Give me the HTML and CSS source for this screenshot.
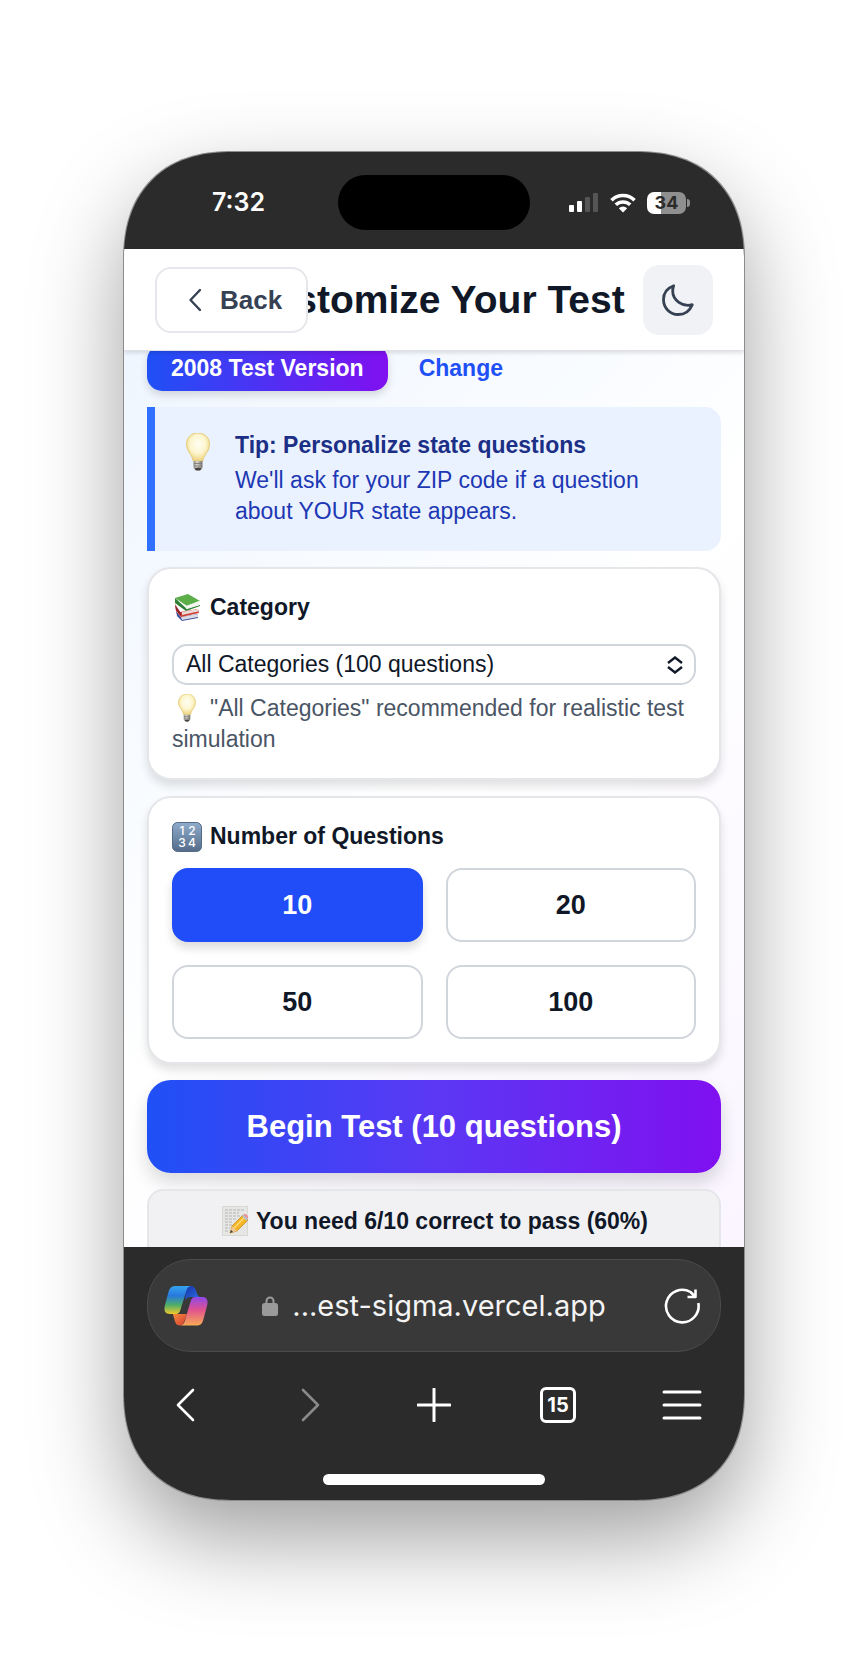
FILE: index.html
```html
<!DOCTYPE html>
<html lang="en">
<head>
<meta charset="utf-8">
<meta name="viewport" content="width=device-width, initial-scale=1">
<title>Customize Your Test</title>
<link rel="stylesheet" href="styles.css">
</head>
<body>
<svg class="defs" aria-hidden="true">
  <defs>
    <radialGradient id="glass" cx=".5" cy=".4" r=".6">
      <stop offset="0" stop-color="#fffef4"/><stop offset=".55" stop-color="#fdf6cf"/><stop offset="1" stop-color="#ecd27c"/>
    </radialGradient>
    <linearGradient id="socket" x1="0" x2="1" y1="0" y2="0">
      <stop offset="0" stop-color="#8d8b84"/><stop offset=".4" stop-color="#d8d6d0"/><stop offset="1" stop-color="#77746d"/>
    </linearGradient>
    <linearGradient id="keypad" x1="0" x2="0" y1="0" y2="1">
      <stop offset="0" stop-color="#8fabcb"/><stop offset="1" stop-color="#546c8a"/>
    </linearGradient>
    <linearGradient id="ribbonA" x1="0" x2="0" y1="0" y2="1">
      <stop offset="0" stop-color="#35a4f0"/><stop offset=".35" stop-color="#2878dc"/><stop offset=".68" stop-color="#4fae67"/><stop offset="1" stop-color="#f2c92c"/>
    </linearGradient>
    <linearGradient id="ribbonB" x1="0" x2="0" y1="0" y2="1">
      <stop offset="0" stop-color="#8f48e8"/><stop offset=".45" stop-color="#e0528f"/><stop offset="1" stop-color="#f9ab55"/>
    </linearGradient>
    <linearGradient id="foldA" x1="0" x2="1" y1="0" y2="1">
      <stop offset="0" stop-color="#1731a8"/><stop offset="1" stop-color="#2b74e8"/>
    </linearGradient>
    <linearGradient id="foldB" x1="0" x2="1" y1="0" y2="1">
      <stop offset="0" stop-color="#f58a3c"/><stop offset="1" stop-color="#d43c33"/>
    </linearGradient>
    <symbol id="bulb" viewBox="0 0 24 38">
      <path d="M12 0C5 0 .5 5 .5 11.500c0 5 3 8 5 11.500 1 1.800 1.200 4 2 5h9c.8-1 1-3.200 2-5 2-3.500 5-6.500 5-11.500C23.500 5 19 0 12 0z" fill="url(#glass)" stroke="#e6cb76"/>
      <path d="M7.500 28h9v6c0 2-2 3.500-4.500 3.500S7.500 36 7.500 34z" fill="url(#socket)"/>
      <path d="M8 30.500h8M8 33h8" stroke="#77736b" stroke-width=".8"/>
      <ellipse cx="12" cy="36" rx="3" ry="1.500" fill="#45423d"/>
    </symbol>
  </defs>
</svg>

<div class="phone">
  <div class="status">
    <span class="time">7:32</span>
    <span class="island"></span>
    <div class="status-icons">
      <svg width="30" height="20" viewBox="0 0 30 20" aria-label="Signal">
        <rect x="0" y="12" width="5" height="7" rx="1" fill="#fff"/>
        <rect x="8" y="8" width="5" height="11" rx="1" fill="#fff"/>
        <rect x="16" y="4" width="5" height="15" rx="1" fill="#555"/>
        <rect x="24" y="0" width="5" height="19" rx="1" fill="#555"/>
      </svg>
      <svg width="26" height="20" viewBox="0 0 26 20" aria-label="Wi-Fi">
        <g fill="none" stroke="#fff" stroke-width="3.600">
          <path d="M1.500 7.200a16.500 16.500 0 0 1 23 0"/>
          <path d="M5.800 11.800a10.500 10.500 0 0 1 14.400 0"/>
        </g>
        <path d="M8.800 15.200a6 6 0 0 1 8.400 0L13 19.500z" fill="#fff"/>
      </svg>
      <span class="battery">34</span>
    </div>
  </div>

  <header class="header">
    <h1 class="title">Customize Your Test</h1>
    <button class="back" type="button">
      <svg width="14" height="24" viewBox="0 0 14 24" aria-hidden="true"><path d="M12 2 2.500 12 12 22" fill="none" stroke="currentColor" stroke-width="2.400" stroke-linecap="round" stroke-linejoin="round"/></svg>
      Back
    </button>
    <button class="theme" type="button" aria-label="Dark mode">
      <svg width="34" height="34" viewBox="0 0 34 34" aria-hidden="true"><path d="M12.700 2.700C6.500 5 2.500 10 2.500 16.500c0 8.500 6.500 15 14.700 15 6.300 0 11.600-3.800 14.100-9.800-9.800 2.600-19.600-4.500-19.600-13.700 0-2 .3-3.800 1-5.300z" fill="none" stroke="currentColor" stroke-width="2.800" stroke-linejoin="round"/></svg>
    </button>
  </header>

  <main class="view">
    <div class="page">
      <div class="version">
        <span class="pill">2008 Test Version</span>
        <a class="change" href="#version">Change</a>
      </div>

      <section class="tip">
        <span class="tip-icon"><svg width="24" height="38"><use href="#bulb"/></svg></span>
        <div class="tip-text">
          <h2 class="heading">Tip: Personalize state questions</h2>
          <p>We'll ask for your ZIP code if a question about YOUR state appears.</p>
        </div>
      </section>

      <section class="card">
        <label class="heading" for="category">
          <span class="emoji"><svg width="26" height="27" viewBox="0 0 26 27" aria-hidden="true">
            <path d="M2 17l5 6 17-3v4L8 27l-5-5z" fill="#41539b"/>
            <path d="M7 23l17-3v3L8 26z" fill="#dcdce6"/>
            <path d="M1 10l5 8 18-3 1 4-18 4-5-6z" fill="#cf3e36"/>
            <path d="M8 18l16-3v2.500L8 21z" fill="#ecdcd9"/>
            <path d="M1 11l6 8v3l-5-6z" fill="#8d2630"/>
            <path d="M1 4 14 0l12 7-13 5z" fill="#5cae49"/>
            <path d="M1 4v5l11 8 14-5v-1l-13 4z" fill="#2f7f35"/>
            <path d="M12 12l13-5v4l-13 4z" fill="#f3f5ee"/>
          </svg></span>
          Category
        </label>
        <div class="select">
          <select id="category">
            <option>All Categories (100 questions)</option>
          </select>
          <svg class="arrows" width="18" height="18" viewBox="0 0 18 18" aria-hidden="true"><path d="M2 7 9 1.500 16 7M2 11l7 5.500 7-5.500" fill="none" stroke="currentColor" stroke-width="2.400"/></svg>
        </div>
        <p class="hint"><span class="emoji"><svg width="20" height="28"><use href="#bulb"/></svg></span>"All Categories" recommended for realistic test simulation</p>
      </section>

      <section class="card">
        <h2 class="heading">
          <span class="emoji"><svg width="30" height="30" viewBox="0 0 30 30" aria-hidden="true">
            <rect x=".5" y=".5" width="29" height="29" rx="5" fill="url(#keypad)" stroke="#536a87"/>
            <g class="keys"><text x="10" y="13">1</text><text x="20" y="13">2</text><text x="10" y="25">3</text><text x="20" y="25">4</text></g>
          </svg></span>
          Number of Questions
        </h2>
        <div class="counts">
          <button class="count selected" type="button">10</button>
          <button class="count" type="button">20</button>
          <button class="count" type="button">50</button>
          <button class="count" type="button">100</button>
        </div>
      </section>

      <button class="begin" type="button">Begin Test (10 questions)</button>

      <p class="pass">
        <span class="emoji"><svg width="27" height="30" viewBox="0 0 27 30" aria-hidden="true">
          <rect x=".5" y=".5" width="25" height="29" fill="#e6e6e4" stroke="#d8d8d5"/>
          <path d="M3 4h19M3 7h14M3 10h15M3 13h11M3 16h8M3 19h7M3 22h5M3 25h4" stroke="#b5b5b3" stroke-width="1" stroke-dasharray="3 1"/>
          <path d="M8 27l2-7L21 9l5 5-11 11z" fill="#f4b529" stroke="#c78a1c" stroke-width=".8"/>
          <path d="M12 22 23 11" stroke="#ffdd74" stroke-width="1.500"/>
          <path d="M8 27l2-7 5 5z" fill="#ecc795"/><path d="M8 27l1-3 2 2z" fill="#3b3632"/>
          <path d="M20 10l2-1.500 4 4.500-1.500 2z" fill="#b9c0c4"/>
          <path d="M21.500 8.500c2-1.500 5.500 1.500 4.500 4.500z" fill="#ec8a8f"/>
        </svg></span>
        You need 6/10 correct to pass (60%)
      </p>
    </div>
  </main>

  <footer class="browser">
    <div class="address">
      <button class="icon-button" type="button" aria-label="Copilot">
        <svg width="44" height="40" viewBox="0 0 44 40" aria-hidden="true">
          <path d="M22 0h5c2.500 0 4 1.500 5 4.500l1 3c.7 2.200 1.500 3.500 4 3.500h-9c-3 0-4.500 0-7 3z" fill="url(#foldA)"/>
          <path d="M9 28h14l-3 8c-.8 2.500-2 3.500-4 3.500-2.500 0-4-1-5-4l-1-3.500c-.6-2.500-1-3.500-1-4z" fill="url(#foldB)"/>
          <path d="M11 0h16c-2.500.4-3.800 2-4.800 5l-5.500 18c-1 3.800-2.500 5-5.200 5H6c-5 0-6.500-3-5-9L4.500 6C5.500 2 7.500 0 11 0z" fill="url(#ribbonA)"/>
          <path d="M33 39.500H16.500c2.500-.4 3.500-2 4.300-4.500l5.400-18.500c1-3.800 2.500-5.500 5.300-5.500H38c5 0 6.500 3 5 9l-3.500 13c-1 4.500-3 6.500-6.500 6.500z" fill="url(#ribbonB)"/>
        </svg>
      </button>
      <button class="url" type="button">
        <svg width="16" height="20" viewBox="0 0 16 20" aria-hidden="true"><path d="M4.500 9V5a3.500 3.500 0 0 1 7 0v4" fill="none" stroke="#9a9a9a" stroke-width="2"/><rect y="7" width="16" height="13" rx="2.500" fill="#9a9a9a"/></svg>
        ...est-sigma.vercel.app
      </button>
      <button class="icon-button" type="button" aria-label="Reload">
        <svg width="36" height="36" viewBox="0 0 36 36" aria-hidden="true"><path d="M34.300 15A16.300 16.300 0 1 1 26.500 4l5 5M31.500 1.500V9h-8" fill="none" stroke="currentColor" stroke-width="2.600" stroke-linejoin="round"/></svg>
      </button>
    </div>
    <nav class="toolbar">
      <button class="icon-button" type="button" aria-label="Back"><svg width="20" height="34" viewBox="0 0 20 34"><path d="M17 2 2 17l15 15" fill="none" stroke="currentColor" stroke-width="2.600" stroke-linecap="round" stroke-linejoin="round"/></svg></button>
      <button class="icon-button muted" type="button" aria-label="Forward"><svg width="20" height="34" viewBox="0 0 20 34"><path d="M3 2l15 15L3 32" fill="none" stroke="currentColor" stroke-width="2.600" stroke-linecap="round" stroke-linejoin="round"/></svg></button>
      <button class="icon-button" type="button" aria-label="New tab"><svg width="34" height="34" viewBox="0 0 34 34"><path d="M17 1v32M1 17h32" stroke="currentColor" stroke-width="3" stroke-linecap="round"/></svg></button>
      <button class="icon-button" type="button" aria-label="Tabs"><span class="tabs">15</span></button>
      <button class="icon-button" type="button" aria-label="Menu"><svg width="40" height="30" viewBox="0 0 40 30"><path d="M2 2h36M2 15h36M2 28h36" stroke="currentColor" stroke-width="3" stroke-linecap="round"/></svg></button>
    </nav>
    <div class="home"></div>
  </footer>
</div>
</body>
</html>
```
FILE: styles.css
```css
* {
  box-sizing: border-box;
}

body {
  margin: 0;
  padding: 152px 124px 160px;
  background: #fff;
  color: #101828;
  font: 23px/31px "Liberation Sans", Arial, sans-serif;
}

h1,
h2,
p {
  margin: 0;
}

button,
select {
  margin: 0;
  padding: 0;
  border: 0;
  background: none;
  color: inherit;
  font: inherit;
}

svg {
  flex: none;
}

.defs {
  position: absolute;
  width: 0;
  height: 0;
}

.phone {
  display: flex;
  flex-direction: column;
  height: calc(100vh - 312px);
  min-height: 900px;
  overflow: hidden;
  border-radius: 96px;
  background: #2b2b2b;
  box-shadow: 0 0 0 1px #8c8c8c, 0 38px 90px rgba(0, 0, 0, 0.38);
}

@supports (corner-shape: superellipse(1.2)) {
  .phone {
    border-radius: 108px;
    corner-shape: superellipse(1.2);
  }
}

/* Status bar */
.status {
  display: grid;
  flex: none;
  grid-template-columns: 1fr 192px 1fr;
  align-items: center;
  justify-items: center;
  padding: 23px 15px 19px;
  color: #fff;
  font-family: Inter, sans-serif;
}

.time {
  font-size: 25px;
  font-weight: 600;
}

.island {
  width: 100%;
  height: 55px;
  border-radius: 28px;
  background: #000;
}

.status-icons {
  display: flex;
  align-items: center;
  gap: 11px;
}

.battery {
  position: relative;
  width: 39px;
  height: 22px;
  margin-right: 4px;
  border-radius: 7px;
  background: linear-gradient(90deg, #fff 36%, #8f8f8f 36%);
  color: #2b2b2b;
  font-size: 18px;
  font-weight: 700;
  line-height: 22px;
  text-align: center;
}

.battery::after {
  position: absolute;
  top: 7px;
  right: -4px;
  width: 3px;
  height: 8px;
  border-radius: 0 3px 3px 0;
  background: #8f8f8f;
  content: "";
}

/* Page header */
.header {
  display: grid;
  z-index: 1;
  flex: none;
  grid-template-columns: auto 1fr auto;
  align-items: center;
  padding: 16px 31px 15px;
  border-bottom: 1px solid #dfe1e7;
  background: #fff;
  box-shadow: 0 2px 4px rgba(0, 0, 0, 0.12);
}

.title {
  grid-area: 1 / 1 / 2 / -1;
  font-size: 39px;
  line-height: 46px;
  text-align: center;
  white-space: nowrap;
}

.back {
  display: flex;
  grid-area: 1 / 1;
  align-items: center;
  gap: 18px;
  height: 66px;
  padding: 0 24px 0 31px;
  border: 2px solid #e5e7eb;
  border-radius: 16px;
  background: #fff;
  color: #364153;
  font-size: 26px;
  font-weight: 700;
}

.theme {
  display: grid;
  grid-area: 1 / 3;
  place-items: center;
  width: 70px;
  height: 70px;
  border-radius: 16px;
  background: #f1f2f5;
  color: #364153;
}

/* Scrolled page */
.view {
  flex: 1;
  min-height: 0;
  overflow: hidden;
  background: linear-gradient(135deg, #eff6ff, #fff 50%, #faf5ff);
}

.page {
  display: flex;
  flex-direction: column;
  gap: 16px;
  margin-top: -6px;
  padding: 0 23px;
}

.version {
  display: flex;
  align-items: center;
  gap: 31px;
  font-weight: 700;
}

.pill {
  padding: 8px 24px 7px;
  border-radius: 15px;
  background: linear-gradient(90deg, #1f50f6, #8010f0);
  box-shadow: 0 4px 8px rgba(0, 0, 0, 0.14);
  color: #fff;
}

.change {
  color: #1f50f6;
  text-decoration: none;
}

.tip {
  display: flex;
  gap: 17px;
  padding: 23px 24px 24px 23px;
  border-left: 8px solid #3070ff;
  border-radius: 0 16px 16px 0;
  background: #ebf2ff;
  color: #1d38b4;
}

.tip-icon {
  display: flex;
  flex: none;
  justify-content: center;
  width: 40px;
  padding-top: 3px;
}

.tip-text {
  display: grid;
  gap: 4px;
}

.tip .heading {
  color: #1c2f86;
}

.heading {
  display: flex;
  align-items: center;
  font-size: 23px;
  font-weight: 700;
  line-height: 31px;
}

.emoji {
  display: inline-flex;
  align-items: center;
  justify-content: center;
  width: 30px;
  height: 30px;
  margin-right: 8px;
  vertical-align: top;
}

.card {
  padding: 23px;
  border: 2px solid #e5e6ea;
  border-radius: 24px;
  background: #fff;
  box-shadow: 0 6px 10px rgba(0, 0, 0, 0.12);
}

.select {
  display: grid;
  align-items: center;
  margin: 21px 0 8px;
}

.select select {
  grid-area: 1 / 1;
  width: 100%;
  height: 41px;
  padding: 0 40px 0 12px;
  border: 2px solid #d1d5dc;
  border-radius: 15px;
  background: #fff;
  appearance: none;
}

.arrows {
  grid-area: 1 / 1;
  justify-self: end;
  margin-right: 12px;
  pointer-events: none;
}

.hint {
  color: #4a5565;
}

.keys {
  fill: #fff;
  font: 500 12px Inter, sans-serif;
  text-anchor: middle;
}

.counts {
  display: grid;
  grid-template-columns: 1fr 1fr;
  gap: 23px;
  margin-top: 16px;
}

.count {
  height: 74px;
  border: 2px solid #d1d5dc;
  border-radius: 16px;
  background: #fff;
  font-size: 27px;
  font-weight: 700;
}

.count.selected {
  border-color: #204df7;
  background: #204df7;
  box-shadow: 0 6px 10px rgba(0, 0, 0, 0.14);
  color: #fff;
}

.begin {
  height: 93px;
  flex: none;
  border-radius: 24px;
  background: linear-gradient(90deg, #1f50f6, #5b38f4 50%, #8010f0);
  box-shadow: 0 10px 18px rgba(0, 0, 0, 0.14);
  color: #fff;
  font-size: 31px;
  font-weight: 700;
}

.pass {
  padding: 15px 23px 23px;
  border: 2px solid #e5e6ea;
  border-radius: 16px;
  background: #f1f1f4;
  font-weight: 700;
  text-align: center;
}

.pass .emoji {
  margin-right: 0;
}

/* Browser controls */
.browser {
  flex: none;
  padding: 12px 0 15px;
  color: #fff;
  font-family: Inter, sans-serif;
}

.address {
  display: grid;
  grid-template-columns: 44px 1fr 44px;
  align-items: center;
  height: 93px;
  margin: 0 23px;
  padding: 0 16px;
  border: 1px solid #4b4b4b;
  border-radius: 44px;
  background: #393939;
}

.icon-button {
  display: grid;
  place-items: center;
}

.url {
  display: flex;
  align-items: center;
  justify-content: center;
  gap: 14px;
  color: #f4f4f4;
  font-size: 29px;
  white-space: nowrap;
}

.toolbar {
  display: grid;
  grid-template-columns: repeat(5, 1fr);
  height: 106px;
}

.muted {
  color: #8a8a8a;
}

.tabs {
  width: 36px;
  height: 36px;
  border: 3px solid #fff;
  border-radius: 6px;
  font-size: 20px;
  font-weight: 700;
  line-height: 30px;
  text-align: center;
}

.home {
  width: 222px;
  height: 11px;
  margin: 16px auto 0;
  border-radius: 6px;
  background: #fff;
}
```
